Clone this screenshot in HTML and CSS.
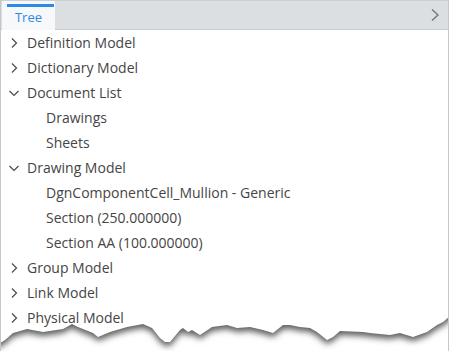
FILE: index.html
```html
<!DOCTYPE html>
<html lang="en">
<head>
  <meta charset="UTF-8">
  <title>Tree</title>
  <link rel="stylesheet" href="styles.css">
</head>
<body>
  <div class="panel">
    <!-- barra de abas -->
    <div class="tabbar">
      <div class="tab"><span class="tab-label">Tree</span></div>
      <svg class="tab-more" viewBox="0 0 10 14" width="10" height="14">
        <polyline points="2,1.5 8,7 2,12.5" fill="none" stroke="#6f7377" stroke-width="1.3"/>
      </svg>
    </div>

    <!-- arvore -->
    <ul class="tree">
      <li class="node"><svg class="chev" viewBox="0 0 12 12"><polyline points="4,1.5 8.5,6 4,10.5"/></svg>Definition Model</li>
      <li class="node"><svg class="chev" viewBox="0 0 12 12"><polyline points="4,1.5 8.5,6 4,10.5"/></svg>Dictionary Model</li>
      <li class="node"><svg class="chev" viewBox="0 0 12 12"><polyline points="1.5,4 6,8.5 10.5,4"/></svg>Document List</li>
      <li class="node child">Drawings</li>
      <li class="node child">Sheets</li>
      <li class="node"><svg class="chev" viewBox="0 0 12 12"><polyline points="1.5,4 6,8.5 10.5,4"/></svg>Drawing Model</li>
      <li class="node child">DgnComponentCell_Mullion - Generic</li>
      <li class="node child">Section (250.000000)</li>
      <li class="node child">Section AA (100.000000)</li>
      <li class="node"><svg class="chev" viewBox="0 0 12 12"><polyline points="4,1.5 8.5,6 4,10.5"/></svg>Group Model</li>
      <li class="node"><svg class="chev" viewBox="0 0 12 12"><polyline points="4,1.5 8.5,6 4,10.5"/></svg>Link Model</li>
      <li class="node"><svg class="chev" viewBox="0 0 12 12"><polyline points="4,1.5 8.5,6 4,10.5"/></svg>Physical Model</li>
      <li class="node"><svg class="chev" viewBox="0 0 12 12"><polyline points="4,1.5 8.5,6 4,10.5"/></svg>Plant Model</li>
    </ul>

    <!-- borda rasgada do recorte -->
    <svg class="torn" viewBox="0 0 450 56" width="450" height="56">
      <defs>
        <filter id="blur" x="-5%" y="-50%" width="110%" height="200%">
          <feGaussianBlur stdDeviation="3.2"/>
        </filter>
        <clipPath id="below">
          <path d="M0,43 L5,40 L13,33 L27,29 L43,32 L63,29 L72,24 L78,27 L93,33 L98,37 L110,32 L127,27 L143,24 L152,28 L160,38 L165,42 L170,42 L180,30 L183,28 L188,32 L192,30 L200,35 L212,27 L227,25 L237,28 L250,27 L263,30 L273,33 L283,25 L290,25 L300,27 L310,28 L317,32 L327,40 L333,37 L340,31 L363,32 L370,33 L390,35 L400,33 L413,37 L427,32 L437,25 L443,22 L450,16 L450,56 L0,56 Z"/>
        </clipPath>
      </defs>
      <path fill="#ffffff" d="M0,43 L5,40 L13,33 L27,29 L43,32 L63,29 L72,24 L78,27 L93,33 L98,37 L110,32 L127,27 L143,24 L152,28 L160,38 L165,42 L170,42 L180,30 L183,28 L188,32 L192,30 L200,35 L212,27 L227,25 L237,28 L250,27 L263,30 L273,33 L283,25 L290,25 L300,27 L310,28 L317,32 L327,40 L333,37 L340,31 L363,32 L370,33 L390,35 L400,33 L413,37 L427,32 L437,25 L443,22 L450,16 L450,56 L0,56 Z"/>
      <g clip-path="url(#below)">
        <path fill="#5c5c5c" filter="url(#blur)" transform="translate(0,4)" d="M-10,-20 L460,-20 L460,16 L450,16 L443,22 L437,25 L427,32 L413,37 L400,33 L390,35 L370,33 L363,32 L340,31 L333,37 L327,40 L317,32 L310,28 L300,27 L290,25 L283,25 L273,33 L263,30 L250,27 L237,28 L227,25 L212,27 L200,35 L192,30 L188,32 L183,28 L180,30 L170,42 L165,42 L160,38 L152,28 L143,24 L127,27 L110,32 L98,37 L93,33 L78,27 L72,24 L63,29 L43,32 L27,29 L13,33 L5,40 L0,43 L-10,45 Z"/>
      </g>
    </svg>
  </div>
</body>
</html>
```

FILE: styles.css
```css
body {
  margin: 0;
  background: #fff;
  font-family: "Open Sans", Arial, sans-serif;
  font-size: 14px;
  color: #454545;
}

/* painel principal */
.panel {
  position: relative;
  width: 449px;
  height: 351px;
  box-sizing: border-box;
  border-left: 1px solid #c4c7ca;
  border-right: 1px solid #c4c7ca;
  overflow: hidden;
}

/* ---------- abas ---------- */
.tabbar {
  height: 30px;
  box-sizing: border-box;
  background: #dcdfe2;
  border-top: 1px solid #cdd0d3;
  border-bottom: 1px solid #c8cbce;
  display: flex;
  justify-content: space-between;
  align-items: center;
  padding-right: 8px;
}
.tab {
  align-self: stretch;
  width: 53px;
  margin-left: 1px;
  margin-bottom: -1px;
  background: #f6f8f9;
  display: flex;
  flex-direction: column;
  align-items: center;
  padding-top: 3px;
}
.tab::before {
  content: "";
  display: block;
  width: 47px;
  height: 3px;
  background: #2b8be6;
  margin-left: 3px;
}
.tab-label {
  color: #2b8be6;
  font-size: 13px;
  line-height: 18px;
  margin-top: 1px;
}
.tab-more {
  display: block;
}

/* ---------- arvore ---------- */
.tree {
  list-style: none;
  margin: 0;
  padding: 0;
}
.node {
  height: 25px;
  display: flex;
  align-items: center;
  padding-left: 7px;
  white-space: nowrap;
}
.node.child {
  padding-left: 45px;
}
.chev {
  width: 12px;
  height: 12px;
  margin-right: 7px;
  fill: none;
  stroke: #4a4a4a;
  stroke-width: 1.2;
}

/* recorte rasgado sobre o fim da lista */
.torn {
  position: absolute;
  left: -1px;
  top: 300px;
  display: block;
}
```
